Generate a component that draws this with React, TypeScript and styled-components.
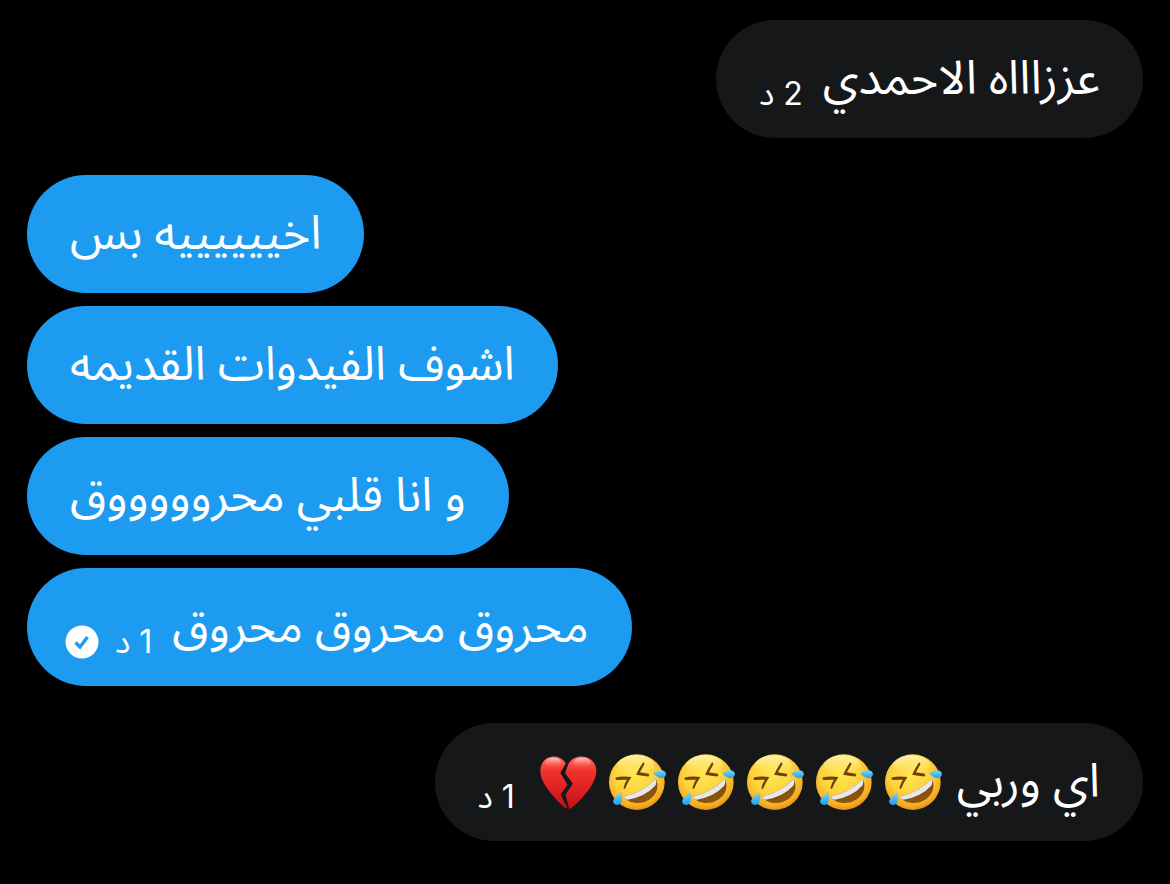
import React from 'react';
import styled, { createGlobalStyle } from 'styled-components';

const GlobalStyle = createGlobalStyle`
  * { box-sizing: border-box; }
  body { margin: 0; background: #000; }
`;

const Thread = styled.main`
  display: flex;
  flex-direction: column;
  gap: 37px;
  min-height: 100vh;
  padding: 20px 27px;
  background: #000;
  color: #fff;
  font-family: "Noto Sans Arabic", "DejaVu Sans", sans-serif;
`;

const Group = styled.section<{ $end?: boolean }>`
  display: flex;
  flex-direction: column;
  gap: 13px;
  align-items: ${(p) => (p.$end ? 'flex-end' : 'flex-start')};
`;

const Bubble = styled.article<{ $own?: boolean }>`
  direction: rtl;
  display: flex;
  align-items: center;
  gap: 20px;
  height: 118px;
  padding: 0 43px;
  border-radius: 59px;
  background: ${(p) => (p.$own ? '#1d9bf0' : '#161719')};
`;

const Text = styled.p`
  margin: 0;
  font-size: 47px;
  line-height: 60px;
  white-space: nowrap;
`;

const Emojis = styled.span`
  display: flex;
  gap: 12px;
  margin-inline: -5px 5px;
`;

const Meta = styled.span<{ $receipt?: boolean }>`
  display: flex;
  align-items: center;
  gap: 16px;
  padding-top: 30px;
  margin-inline-end: ${(p) => (p.$receipt ? '-5px' : '0')};
`;

const Time = styled.time`
  font-family: Inter, "Noto Sans Arabic", "DejaVu Sans", sans-serif;
  font-size: 32px;
  line-height: 40px;
  white-space: nowrap;
`;

const Icon = styled.svg`
  display: block;
  flex: none;
  overflow: visible;
`;

function Laugh() {
  return (
    <Icon width="57" height="57" viewBox="0 0 168 168" role="img" aria-label="🤣">
      <defs>
        <radialGradient id="face" cx="0.46" cy="0.36" r="0.66">
          <stop offset="0" stopColor="#ffe650" />
          <stop offset="0.55" stopColor="#fdd23c" />
          <stop offset="0.85" stopColor="#f6ad24" />
          <stop offset="1" stopColor="#e48a12" />
        </radialGradient>
        <linearGradient id="shine" x1="0" y1="0" x2="0" y2="1">
          <stop offset="0" stopColor="#fffbd0" stopOpacity="0.75" />
          <stop offset="1" stopColor="#fff07a" stopOpacity="0" />
        </linearGradient>
        <linearGradient id="mouth" x1="0" y1="0" x2="0.5" y2="1">
          <stop offset="0" stopColor="#6b3a05" />
          <stop offset="1" stopColor="#8f590c" />
        </linearGradient>
        <linearGradient id="tear" x1="0" y1="0" x2="0" y2="1">
          <stop offset="0" stopColor="#7ad6fb" />
          <stop offset="1" stopColor="#1ba2ea" />
        </linearGradient>
      </defs>
      <circle cx="82" cy="83" r="82" fill="url(#face)" />
      <ellipse cx="78" cy="32" rx="54" ry="28" fill="url(#shine)" />
      <path d="M20 69 Q42 64 66 68 Q55 84 47 103 Q42 103 43 98 Q46 86 53 76 Q38 75 22 77 Q17 73 20 69Z" fill="#70400a" />
      <path d="M100 25 Q106 25 104 31 Q98 42 91 54 Q104 56 117 58 Q121 63 116 66 Q98 65 80 61 Q88 43 100 25Z" fill="#70400a" />
      <path d="M43 126 Q99 113 138 74 C152 103 134 133 103 142 C80 148 56 143 43 126Z" fill="url(#mouth)" />
      <path d="M43 126 Q99 113 138 74 Q142 84 137 93 Q107 126 55 135 Q47 133 43 126Z" fill="#e6e6ee" />
      <path d="M36 112 C39 123 39 135 36 144 C30 153 13 152 12 140 C12 131 28 121 36 112Z" fill="url(#tear)" />
      <path d="M130 58 C139 51 153 45 162 50 C171 55 169 68 158 71 C148 73 139 64 130 58Z" fill="url(#tear)" />
    </Icon>
  );
}

function BrokenHeart() {
  return (
    <Icon width="57" height="57" viewBox="0 0 168 168" role="img" aria-label="💔">
      <defs>
        <linearGradient id="heart" x1="0" y1="0" x2="0" y2="1">
          <stop offset="0" stopColor="#ff6a5c" />
          <stop offset="0.3" stopColor="#f2302e" />
          <stop offset="1" stopColor="#c40f16" />
        </linearGradient>
        <linearGradient id="gloss" x1="0" y1="0" x2="0" y2="1">
          <stop offset="0" stopColor="#ffd8d2" stopOpacity="0.85" />
          <stop offset="1" stopColor="#ff6b60" stopOpacity="0" />
        </linearGradient>
      </defs>
      <path d="M76 27 C66 12 54 7 39 7 C15 8 1 27 1 51 C1 90 50 138 77 162 L80 158 L61 120 L81 91 L60 56Z" fill="url(#heart)" />
      <path d="M84 28 C95 11 109 7 124 7 C149 8 166 26 166 50 C166 88 124 133 90 162 L86 160 L75 120 L97 87 L74 57Z" fill="url(#heart)" />
      <ellipse cx="39" cy="26" rx="25" ry="15" fill="url(#gloss)" />
      <ellipse cx="124" cy="26" rx="26" ry="15" fill="url(#gloss)" />
    </Icon>
  );
}

function Seen() {
  return (
    <Icon width="34" height="34" viewBox="0 0 34 34" role="img" aria-label="تم">
      <circle cx="17" cy="17" r="16.5" fill="#fff" />
      <path d="M10.5 17.5 L15 22 L22.5 12" fill="none" stroke="#1d9bf0" strokeWidth="3.4" />
    </Icon>
  );
}

export default function App() {
  return (
    <>
      <GlobalStyle />
      <Thread lang="ar">
        <Group $end>
          <Bubble>
            <Text>عززاااه الاحمدي</Text>
            <Meta><Time>2 د</Time></Meta>
          </Bubble>
        </Group>
        <Group>
          <Bubble $own><Text>اخييييييه بس</Text></Bubble>
          <Bubble $own><Text>اشوف الفيدوات القديمه</Text></Bubble>
          <Bubble $own><Text>و انا قلبي محروووووق</Text></Bubble>
          <Bubble $own>
            <Text>محروق محروق محروق</Text>
            <Meta $receipt><Time>1 د</Time><Seen /></Meta>
          </Bubble>
        </Group>
        <Group $end>
          <Bubble>
            <Text>اي وربي</Text>
            <Emojis><Laugh /><Laugh /><Laugh /><Laugh /><Laugh /><BrokenHeart /></Emojis>
            <Meta><Time>1 د</Time></Meta>
          </Bubble>
        </Group>
      </Thread>
    </>
  );
}
